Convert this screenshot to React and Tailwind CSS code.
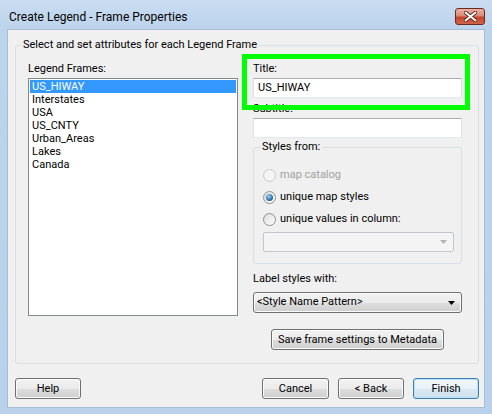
import React from 'react';

const btnFace = "bg-[linear-gradient(to_bottom,#f2f2f2_0%,#ebebeb_50%,#dddddd_51%,#cfcfcf_100%)]";

function Button({ children, className = "", primary = false }) {
    return (
        <button
            className={
                "h-[21px] rounded-[3px] border flex items-center justify-center text-[11px] text-black leading-none " +
                (primary
                    ? "border-[#3c7fb1] shadow-[inset_0_0_0_1px_#bfe1f5] bg-[linear-gradient(to_bottom,#f2f7fb_0%,#e8f1f8_50%,#dbe8f3_51%,#cfe0ee_100%)] "
                    : "border-[#707070] shadow-[inset_0_0_0_1px_#fbfbfb] " + btnFace + " ") +
                className
            }
        >
            {children}
        </button>
    );
}

function Radio({ label, checked = false, disabled = false }) {
    return (
        <div className="h-[22px] flex items-center">
            <span
                className={
                    "w-[13px] h-[13px] rounded-full border flex items-center justify-center " +
                    (disabled
                        ? "border-[#c9c9c9] bg-[#f4f4f4]"
                        : "border-[#8e8f8f] bg-[linear-gradient(135deg,#dcdcdc,#ffffff)]")
                }
            >
                {checked && (
                    <span className="w-[7px] h-[7px] rounded-full bg-[radial-gradient(circle_at_40%_35%,#9fd0f5,#1f5f9f_70%)]" />
                )}
            </span>
            <span className={"ml-[4px] " + (disabled ? "text-[#a0a0a0]" : "text-black")}>{label}</span>
        </div>
    );
}

function Arrow({ color }) {
    return (
        <svg width="7" height="4" viewBox="0 0 7 4">
            <path d="M0 0 L7 0 L3.5 4 Z" fill={color} />
        </svg>
    );
}

function App() {
    const frames = ["US_HIWAY", "Interstates", "USA", "US_CNTY", "Urban_Areas", "Lakes", "Canada"];

    return (
        <div className="relative w-[492px] h-[414px] flex flex-col bg-[linear-gradient(to_bottom,#c9dcf1_0px,#bcd3ec_30px,#bad1eb_100%)] font-['Roboto',sans-serif] text-[11px] text-black">
            {/* title bar */}
            <div className="h-[29px] pt-[4px] pl-[9px] pr-[7px] flex items-center justify-between">
                <span className="text-[12px] leading-none">Create Legend - Frame Properties</span>
                <div className="w-[30px] h-[17px] rounded-[3px] border border-[#6d2a1e] bg-[linear-gradient(to_bottom,#eab1a4_0%,#dc8a76_45%,#c5452b_55%,#d2644a_100%)] flex items-center justify-center">
                    <svg width="13" height="11" viewBox="0 0 13 11">
                        <path d="M1.5 1.5 L11.5 9.5 M11.5 1.5 L1.5 9.5" stroke="#5a2318" strokeWidth="3.6" strokeLinecap="round" />
                        <path d="M1.5 1.5 L11.5 9.5 M11.5 1.5 L1.5 9.5" stroke="#ffffff" strokeWidth="2" strokeLinecap="round" />
                    </svg>
                </div>
            </div>

            {/* client area */}
            <div className="flex-1 mx-[7px] mb-[6px] border border-[#a7bdd6] bg-[#f0f0f0] flex flex-col pt-[8px] pl-[7px] pr-[5px]">
                <fieldset className="h-[326px] border border-[#d5dfe5] rounded-[3px]">
                    <legend className="ml-[5px] px-[2px] leading-[14px]">Select and set attributes for each Legend Frame</legend>
                    <div className="flex pl-[12px] pt-[10px]">
                        {/* left column */}
                        <div className="w-[210px] flex flex-col">
                            <span className="leading-[14px]">Legend Frames:</span>
                            <div className="mt-[2px] h-[238px] border border-[#828790] bg-white pt-[1px] px-[1px]">
                                {frames.map((f, i) => (
                                    <div
                                        key={f}
                                        className={"h-[13px] pl-[2px] flex items-center leading-[13px] " + (i === 0 ? "bg-[#3399ff] text-white" : "")}
                                    >
                                        {f}
                                    </div>
                                ))}
                            </div>
                        </div>

                        {/* right column */}
                        <div className="w-[209px] ml-[15px] flex flex-col">
                            <span className="leading-[14px]">Title:</span>
                            <div className="mt-[2px] h-[20px] border border-[#abadb3] border-l-[#dbdfe6] border-r-[#dbdfe6] border-b-[#e3e9ef] bg-white pl-[4px] flex items-center">
                                US_HIWAY
                            </div>
                            <span className="mt-[4px] leading-[14px]">Subtitle:</span>
                            <div className="mt-[2px] h-[20px] border border-[#abadb3] border-l-[#dbdfe6] border-r-[#dbdfe6] border-b-[#e3e9ef] bg-white" />

                            <fieldset className="mt-[2px] h-[124px] border border-[#d5dfe5] rounded-[3px]">
                                <legend className="ml-[6px] px-[2px] leading-[14px]">Styles from:</legend>
                                <div className="pl-[9px] pr-[7px] pt-[10px] flex flex-col">
                                    <Radio label="map catalog" disabled />
                                    <Radio label="unique map styles" checked />
                                    <Radio label="unique values in column:" />
                                    <div className="mt-[2px] h-[20px] rounded-[2px] border border-[#c2c5c9] bg-[#f4f4f4] flex items-center justify-end pr-[6px]">
                                        <Arrow color="#b4b4b4" />
                                    </div>
                                </div>
                            </fieldset>

                            <span className="mt-[8px] leading-[14px]">Label styles with:</span>
                            <div className={"mt-[6px] h-[21px] rounded-[3px] border border-[#707070] shadow-[inset_0_0_0_1px_#fbfbfb] pl-[3px] pr-[6px] flex items-center justify-between " + btnFace}>
                                <span>&lt;Style Name Pattern&gt;</span>
                                <Arrow color="#000000" />
                            </div>

                            <div className="mt-[16px] flex justify-center">
                                <Button className="w-[173px]">Save frame settings to Metadata</Button>
                            </div>
                        </div>
                    </div>
                </fieldset>

                {/* buttons */}
                <div className="mt-[14px] flex justify-between">
                    <Button className="w-[66px]">Help</Button>
                    <div className="flex gap-[9px]">
                        <Button className="w-[67px]">Cancel</Button>
                        <Button className="w-[66px]">&lt; Back</Button>
                        <Button className="w-[66px]" primary>Finish</Button>
                    </div>
                </div>
            </div>

            {/* highlight box over the title field */}
            <div className="absolute left-[242px] top-[54px] w-[228px] h-[56px] border-[5px] border-[#00ff00] pointer-events-none" />
        </div>
    );
}

export default App;
